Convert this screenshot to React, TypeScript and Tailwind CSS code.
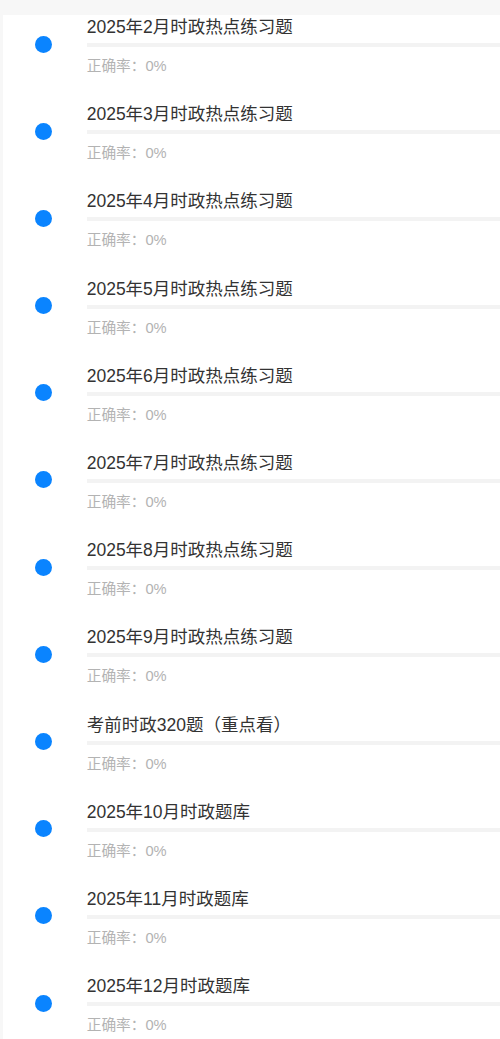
const items = [
  '2025年2月时政热点练习题',
  '2025年3月时政热点练习题',
  '2025年4月时政热点练习题',
  '2025年5月时政热点练习题',
  '2025年6月时政热点练习题',
  '2025年7月时政热点练习题',
  '2025年8月时政热点练习题',
  '2025年9月时政热点练习题',
  '考前时政320题（重点看）',
  '2025年10月时政题库',
  '2025年11月时政题库',
  '2025年12月时政题库',
];

function Row({ title }: { title: string }) {
  return (
    <div className="flex h-[87.2px]">
      <div className="w-[83.7px] flex-shrink-0 pl-[31.5px] pt-[20.5px]">
        <div className="h-[17px] w-[17px] rounded-full bg-[#0a84ff]" />
      </div>
      <div className="flex-1">
        <div className="text-[17.5px] leading-[24px] text-[#333333]">{title}</div>
        <div className="mt-[4px] h-[4px] w-full bg-[#f3f3f3]" />
        <div className="mt-[9px] text-[14.7px] leading-[20px] text-[#b3b3b3]">正确率：0%</div>
      </div>
    </div>
  );
}

export default function App() {
  return (
    <div
      className="min-h-screen bg-[#f7f7f7] pl-[3px] pt-[15px]"
      style={{ fontFamily: '"Liberation Sans", "Noto Sans CJK SC", sans-serif' }}
    >
      <div className="h-[1024px] overflow-hidden bg-white">
        {items.map((title, i) => (
          <Row key={i} title={title} />
        ))}
      </div>
    </div>
  );
}
